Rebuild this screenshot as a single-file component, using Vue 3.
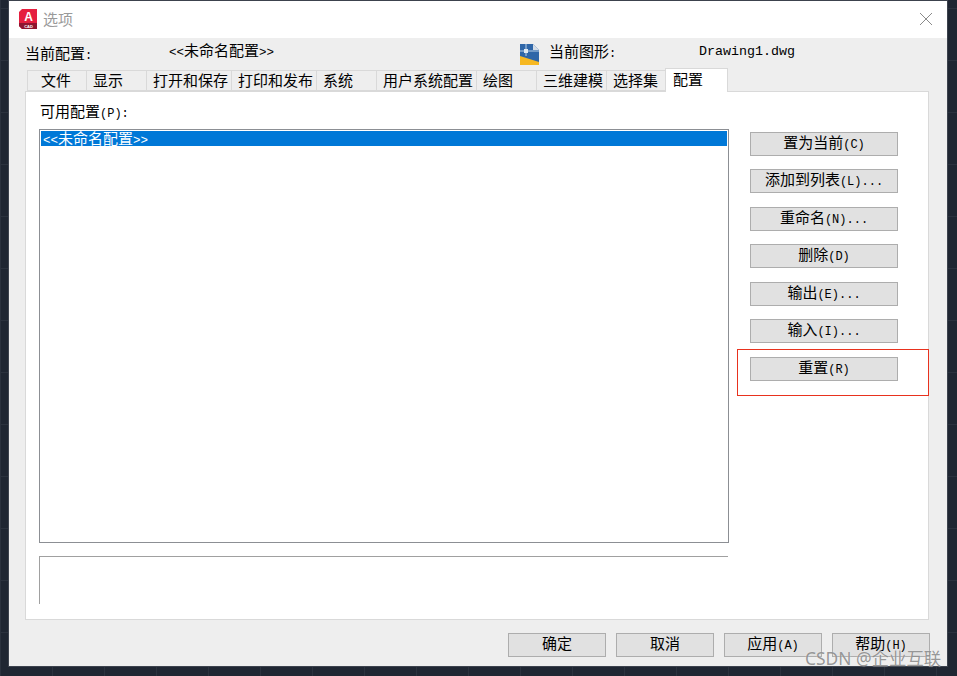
<script setup>
const tabs = [
  { label: '文件', width: 59, pad: 13 },
  { label: '显示', width: 60, pad: 6 },
  { label: '打开和保存', width: 85, pad: 6 },
  { label: '打印和发布', width: 85, pad: 6 },
  { label: '系统', width: 60, pad: 6 },
  { label: '用户系统配置', width: 100, pad: 6 },
  { label: '绘图', width: 60, pad: 6 },
  { label: '三维建模', width: 70, pad: 6 },
  { label: '选择集', width: 59, pad: 6 },
]
const sideButtons = [
  ['置为当前', '(C)'],
  ['添加到列表', '(L)...'],
  ['重命名', '(N)...'],
  ['删除', '(D)'],
  ['输出', '(E)...'],
  ['输入', '(I)...'],
  ['重置', '(R)'],
]
const footerButtons = [
  ['确定', ''],
  ['取消', ''],
  ['应用', '(A)'],
  ['帮助', '(H)'],
]
</script>

<template>
  <div class="desktop">
    <div class="window">
      <header class="titlebar">
        <svg class="app-icon" width="18" height="21" viewBox="0 0 18 21">
          <path d="M3 0H18V20H3L0 17V3Z" fill="#e51f3f" />
          <path d="M0 14H18V20H3L0 17Z" fill="#8f1530" />
          <text x="9.5" y="11.5" text-anchor="middle" class="icon-a">A</text>
          <text x="9.5" y="18.6" text-anchor="middle" class="icon-cad">CAD</text>
        </svg>
        <span class="title">选项</span>
        <svg class="close" width="14" height="14" viewBox="0 0 14 14">
          <path d="M1 1L13 13M13 1L1 13" stroke="#8a8a8a" stroke-width="1" fill="none" />
        </svg>
      </header>

      <div class="body">
        <div class="info">
          <span class="info-label">当前配置<span class="lat">:</span></span>
          <span class="info-profile"><span class="lat">&lt;&lt;</span>未命名配置<span class="lat">&gt;&gt;</span></span>
          <svg class="drawing-icon" width="19" height="21" viewBox="0 0 19 21">
            <path d="M0 0H13L19 6V21H0Z" fill="#2f66a8" />
            <path d="M13 0L19 6H13Z" fill="#d5dde6" />
            <path d="M0 20V12L19 18V21H0Z" fill="#f6b822" />
            <path d="M0 7H19M6 0V12" stroke="#b9cfe6" stroke-width="1" fill="none" />
            <rect x="4" y="5" width="4" height="4" fill="#dfe9f3" />
          </svg>
          <span class="info-drawing-label">当前图形<span class="lat">:</span></span>
          <span class="info-file">Drawing1.dwg</span>
        </div>

        <div class="tabs">
          <div
            v-for="tab in tabs"
            :key="tab.label"
            class="tab"
            :style="{ width: tab.width + 'px', paddingLeft: tab.pad + 'px' }"
          >{{ tab.label }}</div>
          <div class="tab tab-active">配置</div>
        </div>

        <section class="panel">
          <div class="main">
            <div class="list-label">可用配置<span class="lat">(P):</span></div>
            <div class="list">
              <div class="list-item"><span class="lat">&lt;&lt;</span>未命名配置<span class="lat">&gt;&gt;</span></div>
            </div>
            <div class="description"></div>
          </div>
          <div class="side">
            <button v-for="b in sideButtons" :key="b[0]" class="btn side-btn">{{ b[0] }}<span class="lat">{{ b[1] }}</span></button>
          </div>
          <div class="highlight"></div>
        </section>

        <footer class="footer">
          <button v-for="b in footerButtons" :key="b[0]" class="btn footer-btn">{{ b[0] }}<span class="lat">{{ b[1] }}</span></button>
        </footer>
      </div>
    </div>
    <div class="watermark">CSDN @企业互联</div>
  </div>
</template>

<style scoped>
.desktop {
  position: relative;
  width: 957px;
  height: 676px;
  overflow: hidden;
  box-sizing: border-box;
  padding: 1px 0 0 9px;
  background-color: #1f2632;
  background-image:
    linear-gradient(to right, #2b323e 1px, transparent 1px),
    linear-gradient(to bottom, #2b323e 1px, transparent 1px);
  background-size: 52px 52px;
  background-position: 0 8px;
  font-family: "Noto Sans CJK SC", "Liberation Mono", sans-serif;
  font-size: 15px;
  color: #000;
}
.lat {
  font-family: "Liberation Mono", monospace;
  font-size: 12px;
}
.window {
  width: 938px;
  height: 665px;
  display: flex;
  flex-direction: column;
  background: #eeeeee;
  box-shadow: 0 0 0 1px #3c424d;
}
.titlebar {
  height: 37px;
  flex: none;
  background: #fff;
  display: flex;
  align-items: center;
  padding: 0 14px 0 10px;
}
.app-icon {
  flex: none;
}
.icon-a {
  font-family: "Liberation Sans", sans-serif;
  font-weight: 700;
  font-size: 12px;
  fill: #fff;
}
.icon-cad {
  font-family: "Liberation Sans", sans-serif;
  font-weight: 700;
  font-size: 4px;
  fill: #fff;
}
.title {
  margin-left: 6px;
  margin-top: -2px;
  font-size: 15px;
  line-height: 20px;
  color: #9a9a9a;
  flex: 1;
}
.close {
  flex: none;
  margin-top: -1px;
  margin-left: -1px;
}
.body {
  flex: 1;
  display: flex;
  flex-direction: column;
}
.info {
  height: 32px;
  flex: none;
  display: flex;
  align-items: center;
  padding-left: 16px;
  line-height: 20px;
}
.info-label {
  width: 144px;
  padding-top: 1px;
}
.info-profile {
  width: 351px;
  margin-top: -5px;
}
.info-profile .lat,
.list-item .lat {
  font-size: 12.5px;
}
.drawing-icon {
  width: 19px;
  margin-right: 10px;
}
.info-drawing-label {
  width: 150px;
  margin-top: -4px;
}
.info-file {
  font-family: "Liberation Mono", monospace;
  font-size: 13.33px;
  margin-top: -4px;
}
.tabs {
  height: 21px;
  flex: none;
  display: flex;
  align-items: flex-end;
  padding-left: 18px;
  position: relative;
  z-index: 1;
}
.tab {
  height: 21px;
  box-sizing: border-box;
  border: 1px solid #d9d9d9;
  border-right: 0;
  line-height: 17px;
  white-space: nowrap;
  background: #eeeeee;
}
.tab-active {
  width: 63px;
  height: 24px;
  margin-bottom: -1px;
  padding-left: 7px;
  background: #fff;
  border: 1px solid #d9d9d9;
  border-bottom: 0;
  line-height: 19px;
}
.panel {
  position: relative;
  width: 904px;
  height: 529px;
  margin-left: 16px;
  box-sizing: border-box;
  background: #fff;
  border: 1px solid #d9d9d9;
  flex: none;
  display: flex;
  padding-left: 13px;
}
.main {
  width: 690px;
  flex: none;
  display: flex;
  flex-direction: column;
}
.list-label {
  height: 37px;
  box-sizing: border-box;
  padding: 9px 0 0 1px;
  line-height: 20px;
}
.list {
  height: 414px;
  box-sizing: border-box;
  border: 1px solid #8c8f94;
  padding: 1px;
}
.list-item {
  height: 15px;
  padding-left: 2px;
  background: #0078d7;
  color: #fff;
  line-height: 14px;
  white-space: nowrap;
}
.description {
  width: 689px;
  height: 48px;
  margin-top: 13px;
  box-sizing: border-box;
  border-top: 1px solid #a0a0a0;
  border-left: 1px solid #a0a0a0;
}
.side {
  width: 148px;
  margin-left: 21px;
  padding-top: 39.9px;
  display: flex;
  flex-direction: column;
  gap: 13.5px;
}
.btn {
  height: 24px;
  padding: 0 0 2px;
  box-sizing: border-box;
  background: #e1e1e1;
  border: 1px solid #adadad;
  border-radius: 0;
  font: inherit;
  color: #000;
  line-height: 18px;
  white-space: nowrap;
}
.side-btn {
  width: 148px;
  flex: none;
}
.highlight {
  position: absolute;
  left: 711px;
  top: 257px;
  width: 192px;
  height: 47px;
  box-sizing: border-box;
  border: 1px solid #e8321e;
  pointer-events: none;
}
.footer {
  display: flex;
  justify-content: flex-end;
  gap: 10px;
  margin-top: 13px;
  padding-right: 17px;
}
.footer-btn {
  width: 98px;
}
.watermark {
  position: absolute;
  left: 805px;
  top: 647px;
  font-family: "Noto Sans", "Noto Sans CJK SC", sans-serif;
  font-size: 17.4px;
  line-height: 22px;
  white-space: nowrap;
  color: rgba(125, 125, 125, 0.8);
  text-shadow: 0 0 1px rgba(255, 255, 255, 0.7);
}
</style>
